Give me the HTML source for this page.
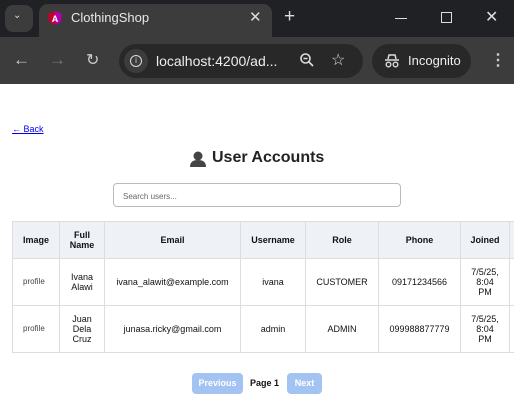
<!DOCTYPE html>
<html><head><meta charset="utf-8"><style>
*{box-sizing:border-box;margin:0;padding:0}
body{width:514px;height:420px;overflow:hidden;background:#fff;font-family:"Liberation Sans",Arial,sans-serif;position:relative}
.abs{position:absolute}
.tabbar{left:0;top:0;width:514px;height:37px;background:#202124}
.toolbar{left:0;top:37px;width:514px;height:47px;background:#3c3c3c}
table{position:absolute;left:12px;top:221px;border-collapse:collapse;font-size:9px;color:#111;table-layout:fixed;width:527px}
td,th{border:1px solid #ddd;text-align:center;vertical-align:middle;padding:0}
th{background:#eef2f7;font-weight:bold;height:37px}
td{height:47px;line-height:10px}
</style></head><body>
<div class="abs tabbar"></div>
<div class="abs" style="left:5px;top:5px;width:28px;height:27px;border-radius:8px;background:#3c3c3c"></div>
<div class="abs" style="left:13px;top:10px;color:#ddd;font-size:10px">&#8964;</div>
<div class="abs" style="left:39px;top:4px;width:233px;height:34px;border-radius:9px 9px 0 0;background:#3c3c3c"></div>
<svg class="abs" style="left:47px;top:10px" width="16" height="16"><path d="M8 1L1 4l1 8 6 3 6-3 1-8z" fill="#c3002f"/><path d="M8 1L15 4l-1 8-6 3z" fill="#a100ff" opacity=".6"/><text x="8" y="12" font-size="9" fill="#fff" text-anchor="middle" font-weight="bold" font-family="Liberation Sans">A</text></svg>
<div class="abs" style="left:71px;top:10px;color:#e8e8e8;font-size:13px">ClothingShop</div>
<div class="abs" style="left:249px;top:8px;color:#ddd;font-size:15px">✕</div>
<div class="abs" style="left:284px;top:6px;color:#ddd;font-size:19px">+</div>
<div class="abs" style="left:395px;top:18px;width:12px;height:1px;background:#ddd"></div>
<div class="abs" style="left:441px;top:12px;width:11px;height:11px;border:1px solid #ddd"></div>
<div class="abs" style="left:485px;top:7px;color:#ddd;font-size:16px">✕</div>
<div class="abs toolbar"></div>
<div class="abs" style="left:13px;top:50px;color:#ccc;font-size:17px">←</div>
<div class="abs" style="left:49px;top:50px;color:#777;font-size:17px">→</div>
<div class="abs" style="left:86px;top:50px;color:#ccc;font-size:16px">↻</div>
<div class="abs" style="left:119px;top:44px;width:244px;height:34px;border-radius:17px;background:#282828"></div>
<div class="abs" style="left:124px;top:49px;width:24px;height:24px;border-radius:12px;background:#3c3c3c"></div>
<div class="abs" style="left:130px;top:55px;width:12px;height:12px;border-radius:6px;border:1.5px solid #ddd;color:#ddd;font-size:8px;text-align:center;line-height:9px">i</div>
<div class="abs" style="left:156px;top:53px;color:#eee;font-size:14px">localhost:4200/ad...</div>
<svg class="abs" style="left:299px;top:52px" width="16" height="16"><circle cx="6.5" cy="6.5" r="4.5" stroke="#ddd" stroke-width="1.6" fill="none"/><path d="M4.5 6.5h4M10 10l4 4" stroke="#ddd" stroke-width="1.6"/></svg>
<div class="abs" style="left:331px;top:50px;color:#ddd;font-size:16px">☆</div>
<div class="abs" style="left:372px;top:44px;width:99px;height:34px;border-radius:17px;background:#282828"></div>
<svg class="abs" style="left:384px;top:53px" width="16" height="16"><path d="M4 6l1-4h6l1 4M1 7h14" stroke="#ddd" stroke-width="1.5" fill="none"/><circle cx="4.5" cy="11.5" r="2.3" stroke="#ddd" stroke-width="1.4" fill="none"/><circle cx="11.5" cy="11.5" r="2.3" stroke="#ddd" stroke-width="1.4" fill="none"/></svg>
<div class="abs" style="left:408px;top:53px;color:#eee;font-size:13px">Incognito</div>
<div class="abs" style="left:490px;top:50px;color:#ccc;font-size:16px;font-weight:bold">⋮</div>

<a class="abs" style="left:12px;top:124px;font-size:9px;color:#00e;text-decoration:underline">← Back</a>
<svg class="abs" style="left:189px;top:150px" width="18" height="18"><circle cx="9" cy="6" r="4.5" fill="#444"/><path d="M1 17c0-5 3-7 8-7s8 2 8 7z" fill="#444"/></svg>
<div class="abs" style="left:212px;top:149px;font-size:16px;font-weight:bold;color:#222">User Accounts</div>
<div class="abs" style="left:113px;top:183px;width:288px;height:24px;border:1px solid #bbb;border-radius:4px;font-size:8px;color:#666;padding:8px 0 0 9px">Search users...</div>
<table>
<colgroup><col style="width:47px"><col style="width:45px"><col style="width:136px"><col style="width:65px"><col style="width:73px"><col style="width:82px"><col style="width:49px"><col style="width:30px"></colgroup>
<tr><th>Image</th><th>Full<br>Name</th><th>Email</th><th>Username</th><th>Role</th><th>Phone</th><th>Joined</th><th></th></tr>
<tr><td style="font-size:8px;color:#444;text-align:left;padding-left:10px">profile</td><td>Ivana<br>Alawi</td><td>ivana_alawit@example.com</td><td>ivana</td><td>CUSTOMER</td><td>09171234566</td><td>7/5/25,<br>8:04<br>PM</td><td></td></tr>
<tr><td style="font-size:8px;color:#444;text-align:left;padding-left:10px">profile</td><td>Juan<br>Dela<br>Cruz</td><td>junasa.ricky@gmail.com</td><td>admin</td><td>ADMIN</td><td>099988877779</td><td>7/5/25,<br>8:04<br>PM</td><td></td></tr>
</table>
<div class="abs" style="left:192px;top:373px;width:51px;height:21px;border-radius:4px;background:#a3c4f3;color:#fff;font-size:9px;font-weight:bold;text-align:center;line-height:21px">Previous</div>
<div class="abs" style="left:250px;top:378px;font-size:9px;font-weight:bold;color:#111">Page 1</div>
<div class="abs" style="left:287px;top:373px;width:35px;height:21px;border-radius:4px;background:#a3c4f3;color:#fff;font-size:9px;font-weight:bold;text-align:center;line-height:21px">Next</div>
</body></html>
